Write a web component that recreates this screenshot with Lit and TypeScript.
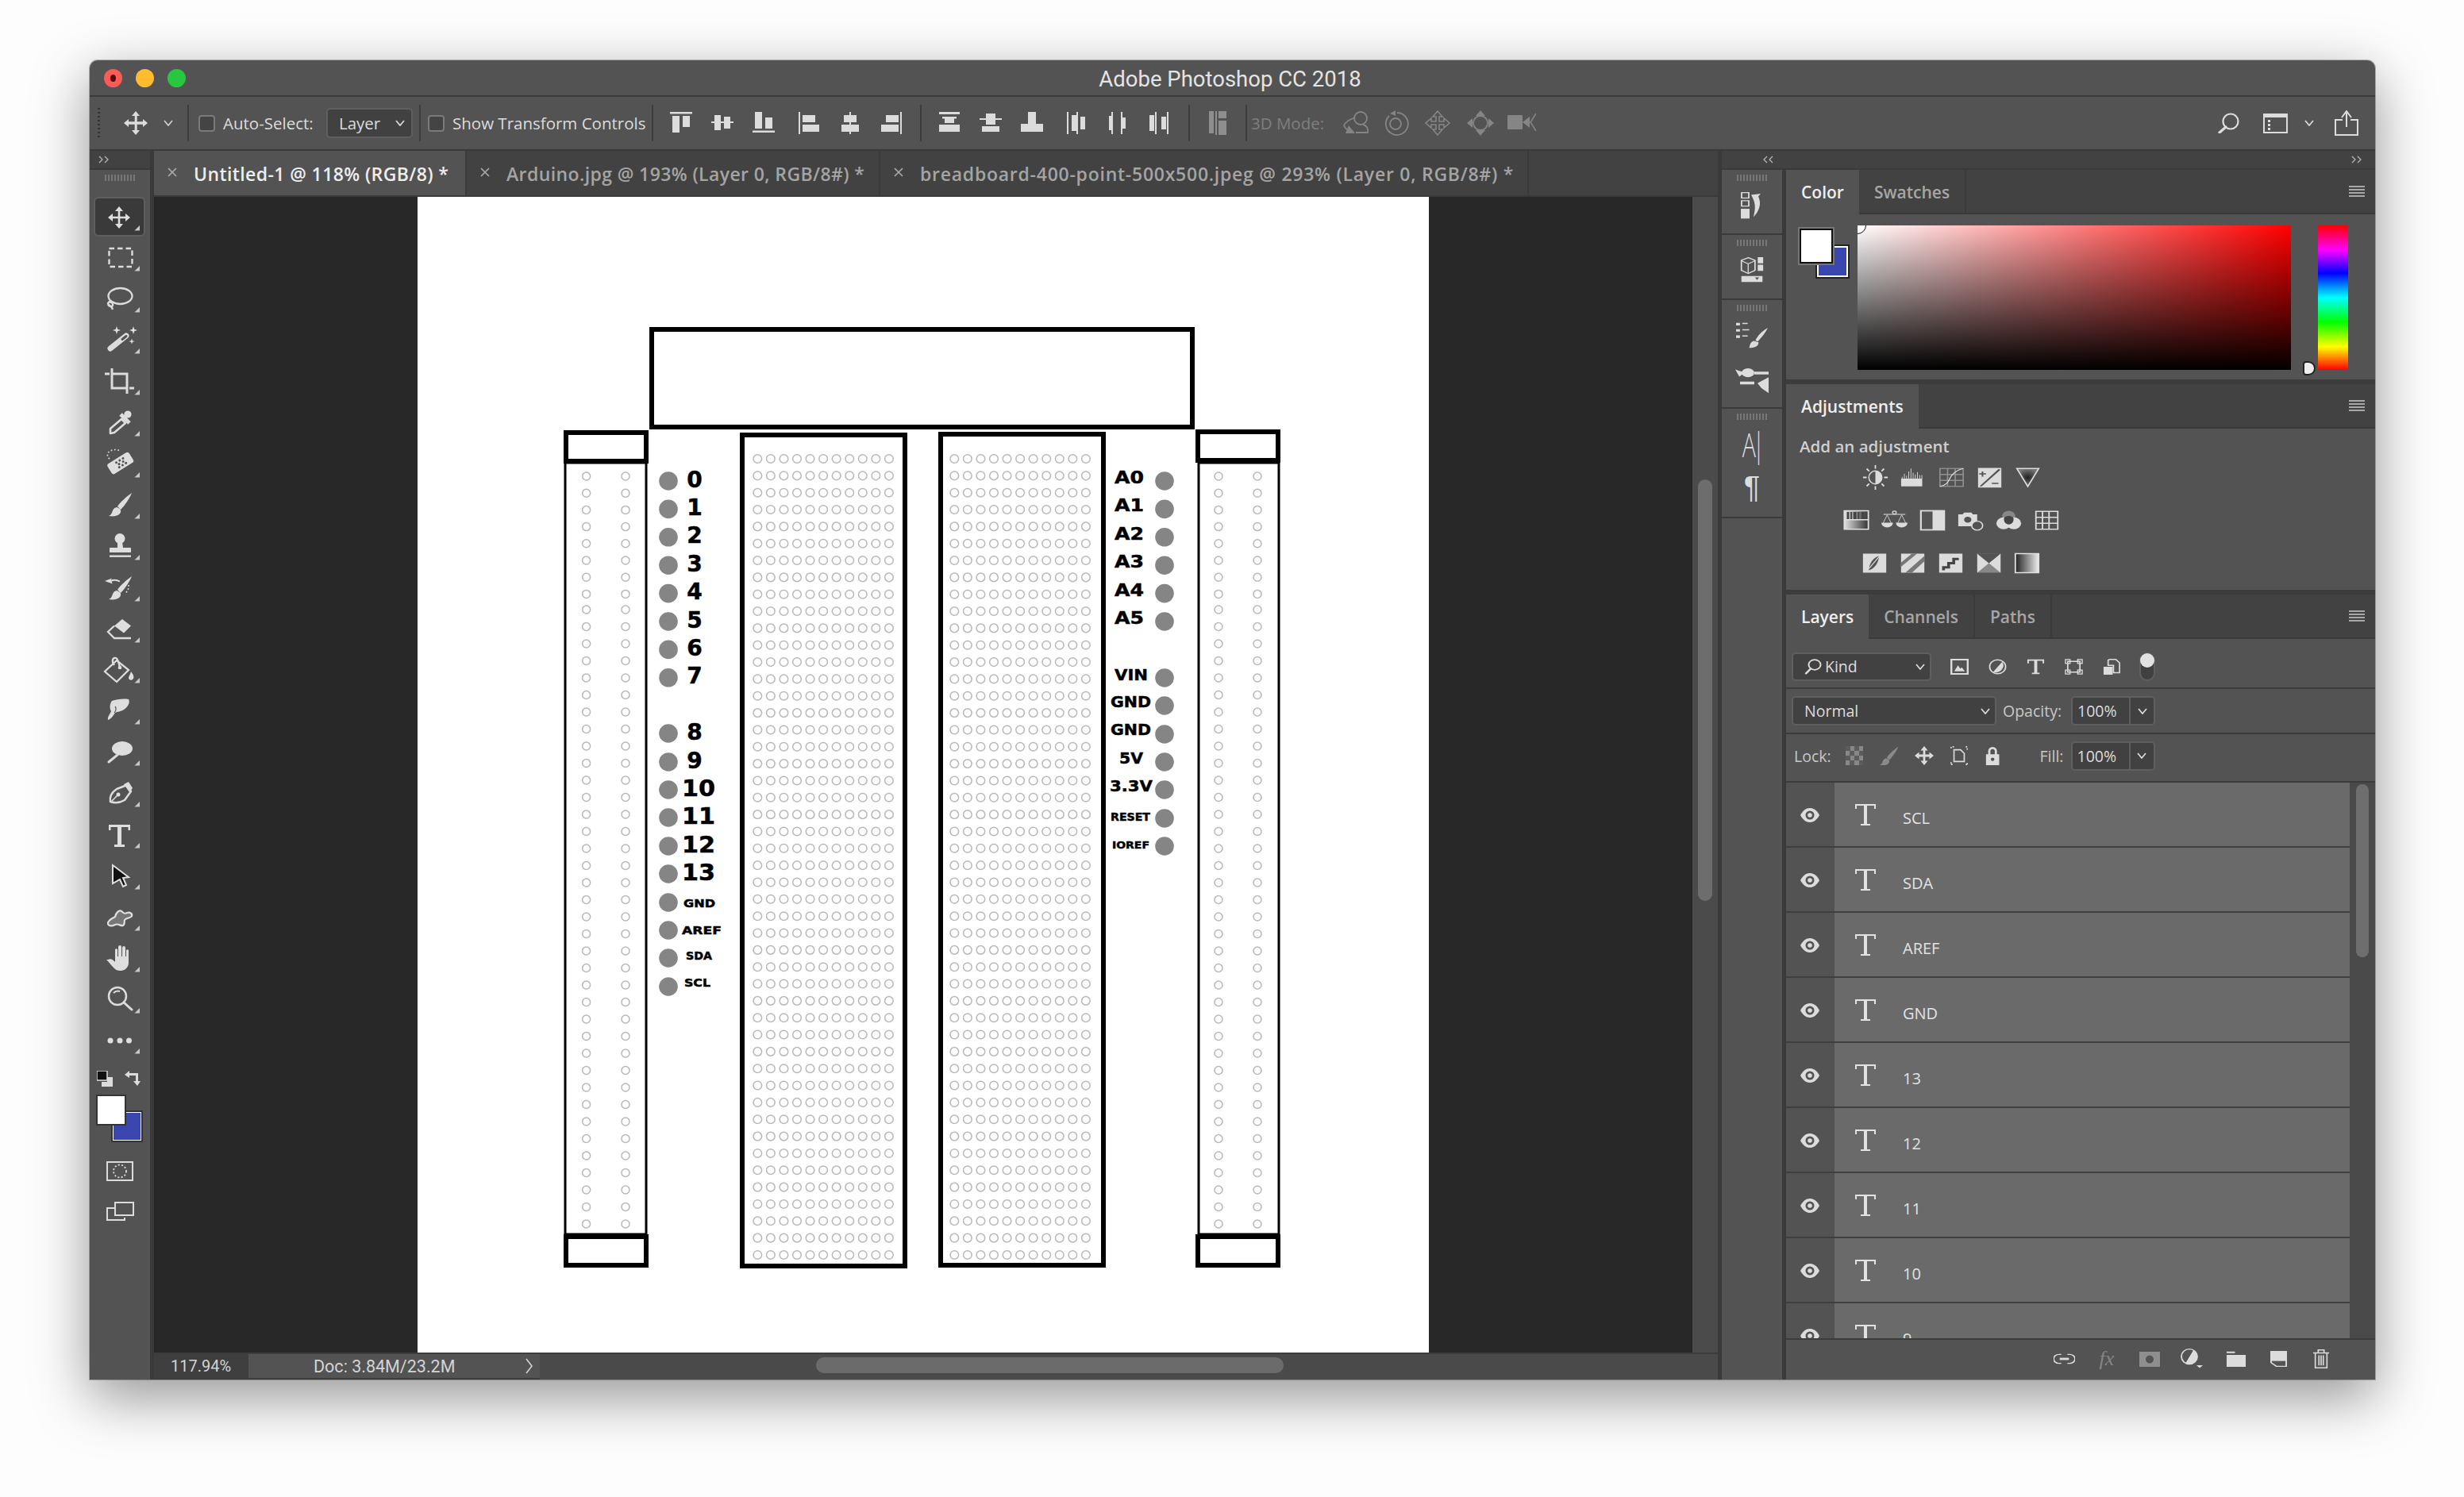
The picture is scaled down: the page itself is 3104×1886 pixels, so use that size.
import { LitElement, html, svg, css, TemplateResult } from "lit";
import { customElement } from "lit/decorators.js";

// little svg wrappers, all icons are currentColor
const ic = (w: number, h: number, inner: unknown, vw = w, vh = h) =>
  html`<svg class="ic" width=${w} height=${h} viewBox="0 0 ${vw} ${vh}" preserveAspectRatio="none" fill="currentColor">${inner}</svg>`;

const chev = (w = 12, h = 8) =>
  html`<svg class="ic" width=${w} height=${h} viewBox="0 0 12 8" fill="none" stroke="currentColor" stroke-width="1.7"><path d="M1 1l5 6 5-6"/></svg>`;

const sparkle = (x: number, y: number, r: number) =>
  svg`<path d="M${x} ${y - r}l${r * 0.25} ${r * 0.75} ${r * 0.75} ${r * 0.25} ${-r * 0.75} ${r * 0.25} ${-r * 0.25} ${r * 0.75} ${-r * 0.25} ${-r * 0.75} ${-r * 0.75} ${-r * 0.25} ${r * 0.75} ${-r * 0.25}z"/>`;

const brushShape = svg`<path d="M48 10C42 14 33 22 30 27l4 4C38 27 45 18 48 10z"/><path d="M29 28c-4 1-5 4-6 7-1 2-2 3-4 4 6 1 12 0 14-3 2-2 1-5 0-6z"/>`;

const toolIcons: TemplateResult[] = [
  svg`<path d="M32 12l-5 6h3.700v6.700H24V21l-6 5 6 5v-3.700h6.700V34H27l5 6 5-6h-3.700v-6.700H40V31l6-5-6-5v3.700h-6.700V18H37z"/>`,
  svg`<rect x="19.500" y="14" width="29" height="23" fill="none" stroke="currentColor" stroke-width="2.400" stroke-dasharray="6.500 4"/>`,
  svg`<g fill="none" stroke="currentColor" stroke-width="2.300"><ellipse cx="33.500" cy="22" rx="15" ry="10"/><path d="M23 29c-4-1-6 2-4 5 2 2 6 1 5-2s-5-3-6-1c0 3 5 3 6 8"/></g>`,
  svg`<path d="M21 36L41 20" fill="none" stroke="currentColor" stroke-width="7" stroke-linecap="round"/><path d="M36 24.500l5-4" stroke="#535353" stroke-width="3" stroke-linecap="round"/>${sparkle(29, 13, 5)}${sparkle(50, 13, 5)}${sparkle(48, 27, 3.5)}`,
  svg`<path d="M14 16h6M23 9v25h20M23 16h19v25M45 34h6" fill="none" stroke="currentColor" stroke-width="3"/>`,
  svg`<path d="M21 33L35 21l5 5-14 12-5 1z" fill="none" stroke="currentColor" stroke-width="2.600" stroke-linejoin="round"/><path d="M34 15l11 11" stroke="currentColor" stroke-width="5"/><circle cx="43" cy="15" r="4.600"/><path d="M38 20l6-6" stroke="currentColor" stroke-width="5"/>`,
  svg`<g transform="rotate(-32 34 25)"><rect x="18" y="17" width="32" height="15" rx="3"/><g fill="#535353"><circle cx="30" cy="21" r="1.500"/><circle cx="35" cy="21" r="1.500"/><circle cx="40" cy="21" r="1.500"/><circle cx="30" cy="28" r="1.500"/><circle cx="35" cy="28" r="1.500"/><circle cx="40" cy="28" r="1.500"/><circle cx="32" cy="24.500" r="1.500"/><circle cx="38" cy="24.500" r="1.500"/></g></g><path d="M20 19c-4-3-3-8 1-10s9-2 12 0" fill="none" stroke="currentColor" stroke-width="1.700" stroke-dasharray="1.700 2.600"/>`,
  brushShape,
  svg`<circle cx="33" cy="15.500" r="6.500"/><path d="M30 20h6l1 7h9q1 0 1 1v5H20v-5q0-1 1-1h9z"/><rect x="20" y="36.500" width="27" height="2.400"/>`,
  svg`<g transform="translate(0 1)">${brushShape}</g><path d="M14 17l9-3.500-1.500 2.200c4-1.500 8-1 12 1.300l-1 1.300c-3.500-1.700-7-2-10-.6l1.200 2.800z"/><path d="M44 22c.5 4-1 8-4 10" fill="none" stroke="currentColor" stroke-width="1.700" stroke-dasharray="1.700 2.500"/>`,
  svg`<path d="M36 13l11 8.500-9 9-12-9z"/><path d="M26 21.500l-8 7.500 8 8h21" fill="none" stroke="currentColor" stroke-width="2.300"/>`,
  svg`<path d="M29 14L14 28l15 13 15-15z" fill="none" stroke="currentColor" stroke-width="2.300"/><path d="M26 20c-4-5-2-10 2-9 3 1 3 6 5 11" fill="none" stroke="currentColor" stroke-width="2.300"/><circle cx="33" cy="23" r="2.300"/><path d="M47 28c3 4 4 6 3 9-2 3-6 2-6-1 0-2 2-4 3-8z"/>`,
  svg`<path d="M23 13c6-2 14-3 21-2 2 3 0 9-6 13-4 3-8 2-11 4-2 3-5 8-9 9-1-4 3-8 4-11-2-3-2-9 1-13z"/><path d="M27 20c2 2 1 6-1 8" stroke="#535353" stroke-width="1.200" fill="none"/>`,
  svg`<ellipse cx="36" cy="21" rx="13" ry="9"/><path d="M19 38l11-9" stroke="currentColor" stroke-width="3" stroke-linecap="round"/>`,
  svg`<path d="M21 36c-1-6 2-12 8-16l13-5 5 8-8 11c-5 3-12 4-18 2z" fill="none" stroke="currentColor" stroke-width="2.500" stroke-linejoin="round"/><path d="M38 14l6-3 5 8-4 5z"/><circle cx="31" cy="27" r="2.500"/><path d="M22 36l8-8" stroke="currentColor" stroke-width="1.600"/>`,
  svg`<path d="M19 13h27v7h-2.500v-4H35v22h4v3H26v-3h4V16h-8.500v4H19z"/>`,
  svg`<path d="M24 12l20 15-7 1 4 9-4 2-4-9-9 5z" fill="#111" stroke="#e0e0e0" stroke-width="2"/>`,
  svg`<path d="M18 34c-1-4 5-7 9-9 1-5 5-9 8-7 3 2 3 4 7 2 4-1 7 1 6 4-1 3-7 2-9 5-1 3 1 5-2 7-3 1-6-3-10-1-4 2-8 2-9-1z" fill="#777" stroke="#e0e0e0" stroke-width="2.200"/>`,
  svg`<path d="M18 27c4-2 7 1 9 3V14a2 2 0 0 1 3 0v9h1V11a2 2 0 0 1 4 0v12h1V12a2 2 0 0 1 4 0v11h1v-8a2 2 0 0 1 3 0v16c0 6-5 10-10 10-4 0-6-1-9-4-3-3-5-6-9-10z"/>`,
  svg`<circle cx="30" cy="21" r="11" fill="none" stroke="currentColor" stroke-width="2.500"/><path d="M38 29l10 9" stroke="currentColor" stroke-width="3" stroke-linecap="round"/><path d="M25 17c2-2 5-3 8-2" fill="none" stroke="currentColor" stroke-width="2"/>`,
  svg`<circle cx="21" cy="26" r="3.500"/><circle cx="33" cy="26" r="3.500"/><circle cx="44.500" cy="26" r="3.500"/>`,
];

const alignIcons: TemplateResult[] = [
  svg`<path d="M0 0h28v2.500H0zM3 5h9v21H3zM16 5h9v14h-9z"/>`,
  svg`<path d="M0 12h28v2H0zM4 4h8v19H4zM16 6h8v15h-8z"/>`,
  svg`<path d="M0 23.500h28V26H0zM3 0h9v21H3zM16 7h9v14h-9z"/>`,
  svg`<path d="M0 0h2v28H0zM5 4h16v9H5zM5 16h21v9H5z"/>`,
  svg`<path d="M12 0h2v28h-2zM5 4h16v9H5zM2 16h22v9H2z"/>`,
  svg`<path d="M24 0h2v28h-2zM6 4h16v9H6zM0 16h22v9H0z"/>`,
  svg`<path d="M2 0h26v3H2zM6 6h18v2.500H21V14h-12V8.500H6zM2 16h26v9H2z" transform="translate(-1 0)"/>`,
  svg`<path d="M8 2h12v6h8v2H20v6h-12v-6H0V8h8zM3 18h22v7H3z"/>`,
  svg`<path d="M9 0h10v15h9v10H0V15h9zM0 22h28v3H0z"/>`,
  svg`<path d="M0 0h2v28H0zM6 4h6v20H6zM12 0h2v28h-2zM17 6h6v16h-6z"/>`,
  svg`<path d="M3 0h2v28H3zM0 5h5v18H0zM15 0h2v28h-2zM15 7h6v14h-6z" transform="translate(1 0)"/>`,
  svg`<path d="M0 4h6v20H0zM7 0h2v28H7zM15 6h6v16h-6zM22 0h2v28h-2z"/>`,
];

const threeD: TemplateResult[] = [
  svg`<g fill="none" stroke="currentColor" stroke-width="1.800"><circle cx="23" cy="10" r="8"/><path d="M16 9C8 12 3 16 2 19c2 6 8 7 10 8"/><path d="M26 18c5 1 7 6 6 10H17"/></g><path d="M8 19l8 10H4z"/>`,
  svg`<g fill="none" stroke="currentColor" stroke-width="1.800"><path d="M7 7a14 14 0 1 0 10-4"/><circle cx="15" cy="17" r="7"/></g><path d="M15 0v7l-7-3z"/>`,
  svg`<path d="M16 1l6 7h-4v6h6v-4l7 6-7 6v-4h-6v6h4l-6 7-6-7h4v-6H8v4l-7-6 7-6v4h6V8h-4z" fill="none" stroke="currentColor" stroke-width="1.600"/>`,
  svg`<path d="M18 0l6 7H12zM18 32l-6-7h12zM1 16l7-6v12zM35 16l-7-6v12z"/><circle cx="18" cy="16" r="9" fill="none" stroke="currentColor" stroke-width="1.800"/>`,
  svg`<rect x="0" y="6" width="19" height="18" rx="1"/><path d="M19 15l9-7v14z"/><path d="M36 4l-7 11 7 11" fill="none" stroke="currentColor" stroke-width="1.600"/>`,
];

const adjIcons: TemplateResult[][] = [
  [
    svg`<circle cx="18" cy="18" r="9" fill="none" stroke="currentColor" stroke-width="1.600"/><path d="M18 9a9 9 0 0 1 0 18z"/><path d="M18 1v5M18 30v5M1 18h5M30 18h5M6 6l3.500 3.500M26.500 26.500L30 30M6 30l3.500-3.500M26.500 9.500L30 6" stroke="currentColor" stroke-width="2"/>`,
    svg`<path d="M1 33V20h1v-3h1v3h2V12h1v8h2v-5h1v5h2V8h1v12h2V3h1v17h2V10h1v10h2v-7h1v7h2V9h1v11h2v-6h1v6h2V14h1v19z"/>`,
    svg`<g fill="none" stroke="#909090" stroke-width="1.800"><rect x="2" y="3" width="32" height="30"/><path d="M12.500 3v30M23 3v30M2 13h32M2 23h32"/></g><path d="M2 33C14 31 14 21 18 15s8-10 16-12" fill="none" stroke="currentColor" stroke-width="1.500"/>`,
    svg`<path fill-rule="evenodd" d="M2 2h32v33H2zM7 8v3H3.500v2H7v3.500h2.200V13H13v-2H9.200V8zM21 27v2h9v-2zM30 4L4 33h3L33 5z"/>`,
    svg`<defs><radialGradient id="vib"><stop offset="0" stop-color="#222"/><stop offset="1" stop-color="#777"/></radialGradient></defs><path d="M3 3h30L18 33z" fill="url(#vib)" stroke="currentColor" stroke-width="2"/>`,
  ],
  [
    svg`<defs><linearGradient id="hsl" x1="0" x2="1"><stop offset="0" stop-color="#e0e0e0"/><stop offset="1" stop-color="#333"/></linearGradient></defs><rect x="1.500" y="2" width="33" height="31" fill="url(#hsl)" stroke="#e0e0e0" stroke-width="2"/><path d="M5 4h3v13H5zM10 4h2v13h-2zM14 4h4v13h-4zM20 4h2v13h-2zM25 4h4v13h-4z" fill="#444"/><rect x="2" y="16" width="32" height="2" fill="#e0e0e0"/>`,
    svg`<circle cx="18" cy="5" r="2.500" fill="none" stroke="currentColor" stroke-width="1.400"/><path d="M3 8h30" stroke="currentColor" stroke-width="1.400"/><path d="M8 9L2 24h12zM28 9l-6 15h12z" fill="none" stroke="currentColor" stroke-width="1"/><path d="M0 22a8 8 0 0 0 16 0zM20 22a8 8 0 0 0 16 0z"/>`,
    svg`<rect x="2" y="2" width="32" height="32" fill="none" stroke="currentColor" stroke-width="2.400"/><rect x="18" y="2" width="16" height="32"/>`,
    svg`<path d="M1 8h6l2-3h10l2 3h6v20H1z"/><circle cx="14" cy="17" r="5" fill="#535353"/><circle cx="27" cy="27" r="7.500" fill="#535353" stroke="currentColor" stroke-width="1.800"/>`,
    svg`<circle cx="18" cy="11" r="9" fill="#888"/><circle cx="11" cy="23" r="10" fill="#dcdcdc"/><circle cx="25" cy="23" r="10" fill="#dcdcdc"/><path d="M12 13c4-3 8-3 12 0 2 5-1 12-6 12s-8-7-6-12z" fill="#444"/>`,
    svg`<path fill-rule="evenodd" d="M2 2h32v32H2zM4 4v8h7V4zM13 4v8h7V4zM22 4v8h10V4zM4 14v8h7v-8zM13 14v8h7v-8zM22 14v8h10v-8zM4 24v8h7v-8zM13 24v8h7v-8zM22 24v8h10v-8z"/>`,
  ],
  [
    svg`<rect x="2" y="2" width="32" height="32"/><path d="M24 6C16 8 10 20 10 30c8-2 14-14 14-24z" fill="#535353"/><path d="M27 3L6 33" stroke="#dcdcdc" stroke-width="1.600"/>`,
    svg`<rect x="2" y="2" width="32" height="32"/><path d="M8 34L34 6v9L17 34zM2 24L24 2h-7L2 17z" fill="#777"/>`,
    svg`<rect x="2" y="2" width="32" height="32"/><path d="M6 30v-7h7v-7h7V9h9v4h-5v7h-7v7h-7v3z" fill="#444"/>`,
    svg`<rect x="2" y="2" width="32" height="32" fill="#888"/><path d="M2 2l16 16L2 34zM34 2L18 18l16 16z"/><path d="M2 2h32L18 18z" fill="#535353"/>`,
    svg`<defs><linearGradient id="gmap" x1="0" x2="1"><stop offset="0" stop-color="#222"/><stop offset="1" stop-color="#eee"/></linearGradient></defs><rect x="2" y="2" width="32" height="32" fill="url(#gmap)" stroke="#e0e0e0" stroke-width="2"/>`,
  ],
];

const filterIcons: TemplateResult[] = [
  svg`<path fill-rule="evenodd" d="M0 0h24v24H0zM2.500 2.500v19h19v-19zM5 19l5-9 3 5 2-2 4 6z"/>`,
  svg`<circle cx="12" cy="12" r="10.500" fill="none" stroke="currentColor" stroke-width="1.800"/><path d="M18 4.500A10.500 10.500 0 0 1 6 20z"/>`,
  svg`<path d="M1 1h22v6h-2V3h-7v18h3v2H7v-2h3V3H3v4H1z"/>`,
  svg`<path d="M4 4h16v16H4z" fill="none" stroke="currentColor" stroke-width="1.800"/><path d="M1 1h6v6H1zM17 1h6v6h-6zM1 17h6v6H1zM17 17h6v6h-6z" fill="none" stroke="currentColor" stroke-width="1.400"/>`,
  svg`<path d="M9 1h8l5 5v15H14V10H7V2z" fill="none" stroke="currentColor" stroke-width="1.800"/><path d="M1 12h12v12H1z"/>`,
];

const lockIcons: TemplateResult[] = [
  svg`<path d="M1 0h22v24H1z" fill="#888"/><path d="M1 0h6v6H1zM12 0h6v6h-6zM6 6h6v6H6zM18 6h5v6h-5zM1 12h6v6H1zM12 12h6v6h-6zM6 18h6v6H6zM18 18h5v6h-5z" fill="#5c5c5c"/>`,
  svg`<g transform="translate(-19 -9) scale(1)" fill="#8a8a8a">${brushShape}</g>`,
  svg`<path d="M13 0l5 6h-3.500v5.500H20V8l6 5-6 5v-3.500h-5.500V20H18l-5 6-5-6h3.500v-5.500H6V18l-6-5 6-5v3.500h5.500V6H8z"/>`,
  svg`<path d="M6 5h9l5 5v11H6z" fill="none" stroke="currentColor" stroke-width="1.800"/><path d="M2 1v2M6 1H4M24 1h-2M24 3v2M2 24v-2M2 25h2M24 25v-2M22 25h2" stroke="currentColor" stroke-width="1.800"/>`,
  svg`<path d="M5 11V7a6 6 0 0 1 12 0v4h3v15H2V11zM8 11h6V7a3 3 0 0 0-6 0z"/><circle cx="11" cy="18" r="2.400" fill="#535353"/>`,
];

const dockIcons = {
  history: svg`<g fill="none" stroke="currentColor" stroke-width="1.800"><rect x="1" y="1" width="9" height="10"/><rect x="1" y="16" width="9" height="10"/></g><rect y="31" width="11" height="18"/><path d="M13 5l12-2-3 5c4 12 2 26-6 38 2-13 3-24-1-35z"/>`,
  cube: svg`<path d="M12 1l10 5v20l-10 6-10-6V6z" fill="none" stroke="currentColor" stroke-width="2"/><path d="M2 7l10 6 10-6M12 13v18" fill="none" stroke="currentColor" stroke-width="1.500"/><path d="M26 0h8v12h-8zM26 15h8v12h-8zM2 37h31v12H2z"/><path d="M22 40h6l-3 5z" fill="#535353"/>`,
  brushes: svg`<path d="M0 1h5v4H0zM8 1h7v2H8zM0 11h5v4H0zM8 11h9v2H8zM0 21h5v4H0zM8 21h7v2H8z"/><path d="M41 9c-3 8-8 15-13 22l-3-2c3-8 9-15 16-20zM23 30c-3 1-4 3-5 6l-1 5c6 0 12-2 12-9z"/>`,
  sliders: svg`<circle cx="16" cy="8" r="8"/><path d="M0 2l12 6L5 15zM24 6h18v5H24zM6 24h18v5H6zM28 27l14-11v29L33 36z"/>`,
};

const LEFT_PINS = [
  ["0", 606],
  ["1", 641.4],
  ["2", 676.8],
  ["3", 712.2],
  ["4", 747.6],
  ["5", 783],
  ["6", 818.4],
  ["7", 853.8],
  ["8", 924],
  ["9", 960],
] as const;

const LEFT_WIDE = [
  ["10", 995],
  ["11", 1030],
  ["12", 1066],
  ["13", 1101],
] as const;

// text, x, len, baseline, pin y
const SMALL_LEFT = [
  ["GND", 861, 40, 1143, 1137],
  ["AREF", 859, 50, 1177, 1172],
  ["SDA", 864, 33, 1209, 1207],
  ["SCL", 862, 33, 1243, 1243],
] as const;

const RIGHT_LABELS = [
  ["A0", 1404, 37, 609, 22],
  ["A1", 1404, 37, 644.4, 22],
  ["A2", 1404, 37, 679.8, 22],
  ["A3", 1404, 37, 715.2, 22],
  ["A4", 1404, 37, 750.6, 22],
  ["A5", 1404, 37, 786, 22],
  ["VIN", 1404, 42, 857, 20],
  ["GND", 1399, 51, 891, 19],
  ["GND", 1399, 51, 926, 19],
  ["5V", 1410, 30, 962, 20],
  ["3.3V", 1398, 54, 997, 20],
  ["RESET", 1399, 50, 1034, 14],
  ["IOREF", 1401, 47, 1069, 13],
] as const;

const RIGHT_PINS = [606, 641.4, 676.8, 712.2, 747.6, 783, 854, 889, 925, 960, 995, 1031, 1066];

const range = (n: number) => Array.from({ length: n }, (_, i) => i);
const railY = (i: number) => (i < 8 ? 600 + 21.2 * i : 768 + 21.5 * (i - 8));
const boardY = (i: number) => 578 + 21.34 * i;

const LAYERS = ["SCL", "SDA", "AREF", "GND", "13", "12", "11", "10", "9"];

@customElement("app-root")
export class AppRoot extends LitElement {
  static styles = css`
    :host {
      display: block;
      width: 3104px;
      height: 1886px;
      box-sizing: border-box;
      padding: 76px 112px 148px 113px;
      background: #fdfdfd;
      font-family: "Open Sans", sans-serif;
      color: #dcdcdc;
      overflow: hidden;
    }
    .ic { display: block; flex: none; }
    .window {
      display: flex;
      flex-direction: column;
      height: 100%;
      background: #535353;
      border-radius: 10px 10px 0 0;
      box-shadow: 0 22px 70px 2px rgba(0, 0, 0, 0.4), 0 0 0 1px rgba(0, 0, 0, 0.25);
    }
    .titlebar {
      display: grid;
      grid-template-columns: 1fr auto 1fr;
      align-items: center;
      height: 44px;
      border-bottom: 2px solid #3a3a3a;
      flex: none;
    }
    .lights { display: flex; gap: 17px; padding-left: 18px; }
    .light { width: 23px; height: 23px; border-radius: 50%; display: flex; align-items: center; justify-content: center; }
    .light.red { background: #fc5b57; }
    .light.red::after { content: ""; width: 7px; height: 9px; border-radius: 50%; background: #560a08; }
    .light.amber { background: #febc2e; }
    .light.green { background: #27c83f; }
    .title { font: 400 27.5px Roboto, sans-serif; color: #e4e4e4; padding: 3px 6px 0 0; }

    .options {
      display: flex;
      align-items: center;
      flex: none;
      height: 66px;
      border-bottom: 2px solid #3a3a3a;
      padding-left: 10px;
      font-size: 20.500px;
    }
    .vgrip { width: 3px; height: 38px; background: repeating-linear-gradient(#333 0 2px, transparent 2px 5px); }
    .sep { width: 2px; height: 46px; background: #3d3d3d; flex: none; }
    .move-opt { margin: 0 20px 0 30px; }
    .opt-chev { margin-right: 18px; color: #cfcfcf; }
    .check { width: 21px; height: 21px; box-sizing: border-box; border: 2px solid #7a7a7a; border-radius: 4px; background: #444; margin: 0 10px 0 12px; flex: none; }
    .check.second { margin-left: 9px; }
    .opt-label { white-space: nowrap; flex: none; }
    .auto { width: 120px; }
    .transform { width: 251px; }
    .combo {
      display: flex;
      align-items: center;
      justify-content: space-between;
      box-sizing: border-box;
      background: #414141;
      border: 2px solid #5f5f5f;
      border-radius: 5px;
      color: #dcdcdc;
      flex: none;
    }
    .layer-combo { width: 109px; height: 38px; margin: 0 8px 0 10px; padding: 0 8px 0 14px; }
    .align { display: flex; padding: 0 9px; }
    .align-set { display: flex; }
    .align-set + .align-set { margin-left: 6px; }
    .cell { width: 52px; display: flex; justify-content: center; }
    .dim { color: #8e8e8e; }
    .mode3d { color: #7f7f7f; width: 112px; padding-left: 5px; box-sizing: border-box; white-space: nowrap; }
    .cells3d { display: flex; color: #858585; }
    .opt-right { margin-left: auto; display: flex; align-items: center; padding-right: 21px; color: #dcdcdc; }
    .opt-right .workspace { margin: 0 21px 0 30px; }
    .opt-right .wchev { margin-right: 26px; }

    .main { flex: 1; display: flex; min-height: 0; }
    .tools { width: 76px; flex: none; display: flex; flex-direction: column; border-right: 5px solid #3a3a3a; }
    .collapse {
      height: 22px;
      border-bottom: 2px solid #3a3a3a;
      background: #424242;
      display: flex;
      align-items: center;
      color: #b5b5b5;
      flex: none;
    }
    .tools .collapse { padding-left: 11px; }
    .grip {
      width: 38px;
      height: 8px;
      margin: 0 auto;
      background: repeating-linear-gradient(90deg, #777 0 2px, transparent 2px 4px);
      flex: none;
    }
    .tools .grip { margin-top: 6px; margin-bottom: 19.6px; }
    .tool { position: relative; height: 51.9px; width: 65px; margin-left: 5px; box-sizing: border-box; flex: none; }
    .tool.on::before {
      content: "";
      position: absolute;
      inset: 0 0 1px 0;
      background: #3a3a3a;
      border: 2px solid #5e5e5e;
      border-radius: 6px;
    }
    .tool svg { position: relative; }
    .swap { display: flex; justify-content: space-between; margin: 12px 0 0 9px; width: 55px; height: 22px; }
    .fgbg { position: relative; height: 59px; margin: 8px 0 0 8px; flex: none; }
    .fg { position: absolute; left: 0; top: 0; width: 38px; height: 39px; box-sizing: border-box; background: #fff; border: 2px solid #333; z-index: 1; }
    .bg { position: absolute; left: 20px; top: 21px; width: 38px; height: 38px; box-sizing: border-box; background: #3a46ae; border: 2px solid #fff; outline: 2px solid #333; outline-offset: -1px; }
    .mask { margin: 25px 0 0 21px; color: #dcdcdc; }
    .screens { margin: 26px 0 0 21px; }

    .center { width: 1970px; flex: none; display: flex; flex-direction: column; min-height: 0; }
    .tabs { display: flex; height: 56px; background: #424242; border-bottom: 2px solid #3a3a3a; flex: none; }
    .tab {
      display: flex;
      align-items: center;
      gap: 21px;
      padding: 2px 0 0 17px;
      box-sizing: border-box;
      border-right: 2px solid #3a3a3a;
      font-size: 23px;
      letter-spacing: 0.75px;
      font-weight: 600;
      color: #a4a4a4;
      white-space: nowrap;
    }
    .tab.short { letter-spacing: 0.4px; }
    .tab.on { background: #535353; color: #ededed; }
    .tab svg { color: #a9a9a9; margin-top: -5px; }
    .stage { flex: 1; display: flex; min-height: 0; }
    .pasteboard { flex: 1; background: #282828; padding-left: 332px; min-width: 0; }
    .doc { display: block; width: 1274px; height: 1456px; background: #fff; }
    .doc text { font-family: "DejaVu Sans", sans-serif; font-weight: 700; fill: #000; stroke: #000; stroke-width: 0.5; }
    .hole { fill: none; stroke: #b8b8b8; stroke-width: 1.5; }
    .frame { fill: none; stroke: #000; stroke-width: 6; }
    .frame.thin { stroke-width: 3; }
    .pin { fill: #858585; }
    .vscroll { width: 32px; flex: none; background: #4b4b4b; box-sizing: border-box; padding: 356px 7px 0; }
    .vscroll div { height: 531px; background: #6d6d6d; border-radius: 9px; }
    .status { height: 34px; flex: none; display: flex; background: #4a4a4a; font: 400 20px Roboto, sans-serif; color: #d4d4d4; border-top: 2px solid #3d3d3d; box-sizing: border-box; }
    .zoom { width: 119px; box-sizing: border-box; padding-left: 21px; background: #3f3f3f; display: flex; align-items: center; border-bottom: 2px solid #3d3d3d; }
    .docinfo { width: 367px; box-sizing: border-box; padding: 0 8px 0 82px; background: #535353; display: flex; align-items: center; justify-content: space-between; border-bottom: 2px solid #3d3d3d; font-size: 21.5px; }
    .hthumb { width: 589px; height: 20px; margin: 4px 0 0 348px; background: #6b6b6b; border-radius: 10px; }

    .gutter { width: 5px; background: #3a3a3a; flex: none; }
    .dock { flex: 1; display: flex; flex-direction: column; min-width: 0; }
    .dock > .collapse { justify-content: space-between; padding: 0 16px 0 51px; }
    .dock-body { flex: 1; display: flex; min-height: 0; }
    .icons { width: 76px; flex: none; display: flex; flex-direction: column; }
    .igroup { display: flex; flex-direction: column; align-items: center; box-sizing: border-box; border-bottom: 2px solid #3a3a3a; padding-top: 6px; flex: none; }
    .igroup .grip { margin-bottom: 14px; }
    .igroup.a { height: 82px; }
    .igroup.b { height: 137px; }
    .igroup.c { height: 138px; }
    .igroup.b svg + svg { margin-top: 25px; }
    .glyph { font: 300 42px/34px "Open Sans", sans-serif; letter-spacing: -6px; color: #dcdcdc; transform: scaleX(0.68); }
    .pilcrow { font: 400 38px/38px "Liberation Sans", sans-serif; margin-top: 18px; }
    .panels { flex: 1; display: flex; flex-direction: column; min-width: 0; }
    .ptabs { display: flex; height: 54px; background: #424242; border-bottom: 2px solid #3a3a3a; flex: none; }
    .ptab { display: flex; align-items: center; padding: 2px 19px 0; font-size: 21px; font-weight: 600; color: #a6a6a6; border-right: 2px solid #3a3a3a; box-sizing: border-box; }
    .ptab.on { background: #535353; color: #eee; border-right: 0; margin-bottom: -2px; padding-bottom: 2px; }
    .burger { margin-left: auto; width: 20px; height: 14px; margin-right: 13px; align-self: center; background: repeating-linear-gradient(#a8a8a8 0 2px, transparent 2px 4px); }
    .pend { height: 6px; background: #3c3c3c; flex: none; }
    .colorbody { height: 208px; display: flex; padding-top: 14px; box-sizing: border-box; flex: none; }
    .cswatch { position: relative; width: 61px; margin: 4px 0 0 17px; flex: none; }
    .cfg { position: absolute; left: 0; top: 0; width: 42px; height: 44px; box-sizing: border-box; background: #fff; border: 2px solid #111; outline: 2px solid #777; z-index: 1; }
    .cbg { position: absolute; left: 22px; top: 22px; width: 39px; height: 39px; box-sizing: border-box; background: #3a46ae; border: 2px solid #fff; outline: 2px solid #222; }
    .field {
      position: relative;
      width: 546px;
      height: 182px;
      margin-left: 12px;
      background: linear-gradient(to top, #000, transparent), linear-gradient(to right, #fff, #f00);
      overflow: hidden;
      flex: none;
    }
    .field::after { content: ""; position: absolute; left: -11px; top: -11px; width: 20px; height: 20px; border-radius: 50%; border: 1.500px solid #111; background: #fff; }
    .hue {
      position: relative;
      width: 38px;
      height: 182px;
      margin-left: 34px;
      background: linear-gradient(#f00 0%, #f0f 17%, #00f 33%, #0ff 50%, #0f0 67%, #ff0 84%, #f00 100%);
      flex: none;
    }
    .hue::after {
      content: "";
      position: absolute;
      left: -19px;
      bottom: -7px;
      width: 12px;
      height: 14px;
      background: #eee;
      border: 2px solid #222;
      border-radius: 4px 9px 9px 4px;
    }
    .adjbody { height: 203px; flex: none; }
    .adjlabel { height: 34px; box-sizing: border-box; padding: 9px 0 0 17px; line-height: 26px; font-size: 20.5px; font-weight: 600; color: #cfcfcf; }
    .adjrow { display: flex; height: 54px; align-items: center; }
    .adjrow.r1 { padding-left: 88px; }
    .adjrow.r2 { padding-left: 64px; }
    .adjrow.r3 { padding-left: 87px; }
    .adjrow .acell { width: 48px; display: flex; justify-content: center; }
    .layerbar { display: flex; align-items: center; padding-left: 7px; border-bottom: 2px solid #3c3c3c; flex: none; box-sizing: border-box; font-size: 19.5px; }
    .layerbar.f { height: 63px; padding-top: 8px; }
    .layerbar.n { height: 57px; }
    .layerbar.l { height: 61px; padding: 0 0 5px 10px; }
    .kind { width: 176px; height: 36px; padding: 0 6px 0 14px; margin-right: 11px; justify-content: flex-start; gap: 4px; }
    .kind .ic:last-child { margin-left: auto; }
    .fcell { width: 48px; display: flex; justify-content: center; }
    .toggle { width: 20px; height: 36px; box-sizing: border-box; border: 2px solid #5f5f5f; background: #404040; border-radius: 10px; margin-left: 11px; position: relative; flex: none; }
    .toggle::before { content: ""; position: absolute; left: -1px; top: -1px; width: 18px; height: 18px; border-radius: 50%; background: #e2e2e2; }
    .normal { width: 258px; height: 37px; padding: 0 6px 0 14px; }
    .olabel { width: 78px; margin: 0 8px; white-space: nowrap; color: #c8c8c8; flex: none; }
    .pct { width: 106px; height: 37px; padding: 0; }
    .pct span { flex: 1; padding-left: 6px; }
    .pct .arrow { width: 31px; height: 100%; box-sizing: border-box; border-left: 2px solid #5f5f5f; display: flex; align-items: center; justify-content: center; }
    .lock-label { width: 51px; color: #c8c8c8; white-space: nowrap; flex: none; margin-right: 2.500px; }
    .lcell { width: 44px; display: flex; justify-content: center; }
    .fill-label { width: 33px; margin: 0 6px 0 36px; color: #c8c8c8; flex: none; }
    .layers { flex: 1; min-height: 0; display: flex; overflow: hidden; }
    .rows { flex: 1; min-width: 0; overflow: hidden; }
    .row { display: flex; height: 80px; border-bottom: 2px solid #3f3f3f; }
    .eye { width: 61px; flex: none; display: flex; align-items: center; justify-content: center; padding: 2px 2px 0 0; box-sizing: border-box; }
    .lcontent { flex: 1; display: flex; align-items: center; background: #6a6a6a; padding-left: 26px; font-size: 20px; color: #e2e2e2; }
    .lcontent span { margin: 8px 0 0 34px; }
    .lscroll { width: 32px; flex: none; background: #4a4a4a; padding: 2px 8px 0; box-sizing: border-box; }
    .lscroll div { height: 218px; background: #6e6e6e; border-radius: 8px; }
    .pfooter { height: 52px; flex: none; border-top: 2px solid #3c3c3c; box-sizing: border-box; display: flex; justify-content: flex-end; align-items: center; padding: 0 41px 2px 0; }
    .fc { width: 54px; display: flex; justify-content: center; }
    .fx { font: italic 300 26px/26px "Liberation Serif", serif; color: #858585; }
  `;

  private renderBoard() {
    const rails = [738.6, 788, 1535, 1584];
    const boards = [954.3, 1202.3];
    return svg`
      <rect class="frame" x="821" y="415" width="681" height="123" />
      <rect class="frame" x="713" y="545" width="101" height="36" />
      <rect class="frame thin" x="712" y="583" width="102" height="972" />
      <rect class="frame" x="713" y="1558" width="101" height="36" />
      <rect class="frame" x="1509" y="544" width="101" height="36" />
      <rect class="frame thin" x="1510" y="583" width="101" height="972" />
      <rect class="frame" x="1509" y="1558" width="101" height="36" />
      <rect class="frame" x="935" y="548" width="205" height="1047" />
      <rect class="frame" x="1185" y="547" width="205" height="1047" />
      ${rails.map((x) => range(45).map((i) => svg`<circle class="hole" cx=${x} cy=${railY(i)} r="5" />`))}
      ${boards.map((x) =>
        range(48).map((r) =>
          range(11).map((c) => svg`<circle class="hole" cx=${x + c * 16.56} cy=${boardY(r)} r="5.3" />`)
        )
      )}
      ${LEFT_PINS.map(
        ([t, y]) => svg`<circle class="pin" cx="842" cy=${y} r="11.8" />
          <text x="875" y=${y + 7.6} font-size="28" text-anchor="middle">${t}</text>`
      )}
      ${LEFT_WIDE.map(
        ([t, y]) => svg`<circle class="pin" cx="842" cy=${y} r="11.8" />
          <text x="859" y=${y + 7.6} font-size="28" textLength="42" lengthAdjust="spacingAndGlyphs">${t}</text>`
      )}
      ${SMALL_LEFT.map(
        ([t, x, len, y, cy]) => svg`<circle class="pin" cx="842" cy=${cy} r="11.8" />
          <text x=${x} y=${y} font-size="14" textLength=${len} lengthAdjust="spacingAndGlyphs">${t}</text>`
      )}
      ${RIGHT_PINS.map((y) => svg`<circle class="pin" cx="1467" cy=${y} r="11.8" />`)}
      ${RIGHT_LABELS.map(
        ([t, x, len, y, fs]) =>
          svg`<text x=${x} y=${y} font-size=${fs} textLength=${len} lengthAdjust="spacingAndGlyphs">${t}</text>`
      )}
    `;
  }

  private renderTools() {
    return toolIcons.map(
      (icon, i) => html`<div class="tool ${i === 0 ? "on" : ""}">
        <svg class="ic" width="65" height="52" viewBox="0 0 65 52" fill="#dedede">
          ${icon}<path d="M58 36v6.500h-6.500z" fill="#c8c8c8" />
        </svg>
      </div>`
    );
  }

  private renderLayerRow(name: string) {
    return html`<div class="row">
      <div class="eye">
        ${ic(
          24,
          18,
          svg`<path fill-rule="evenodd" d="M12 0c6 0 10 5 12 9-2 4-6 9-12 9S2 13 0 9c2-4 6-9 12-9zm0 3.500a5.500 5.500 0 1 0 0 11 5.500 5.500 0 0 0 0-11z"/><circle cx="12" cy="9" r="2.800" />`
        )}
      </div>
      <div class="lcontent">
        ${ic(26, 27, svg`<path d="M0 0h26v6h-2V2h-9v23h4v2H7v-2h4V2H2v4H0z" />`)}
        <span>${name}</span>
      </div>
    </div>`;
  }

  render() {
    return html`<div class="window">
      <div class="titlebar">
        <div class="lights">
          <div class="light red"></div>
          <div class="light amber"></div>
          <div class="light green"></div>
        </div>
        <div class="title">Adobe Photoshop CC 2018</div>
        <div></div>
      </div>

      <div class="options">
        <div class="vgrip"></div>
        <div class="move-opt">${ic(30, 30, svg`<path d="M15 0l-5 6h3.700v7.300H6V10l-6 5 6 5v-3.300h7.700V24H10l5 6 5-6h-3.300v-7.300H24V20l6-5-6-5v3.300h-7.300V6H20z" />`)}</div>
        <div class="opt-chev">${chev()}</div>
        <div class="sep"></div>
        <div class="check"></div>
        <div class="opt-label auto">Auto-Select:</div>
        <div class="combo layer-combo"><span>Layer</span>${chev()}</div>
        <div class="sep"></div>
        <div class="check second"></div>
        <div class="opt-label transform">Show Transform Controls</div>
        <div class="sep"></div>
        <div class="align">
          <div class="align-set">${alignIcons.slice(0, 3).map((i) => html`<div class="cell">${ic(28, 28, i)}</div>`)}</div>
          <div class="align-set">${alignIcons.slice(3, 6).map((i) => html`<div class="cell">${ic(28, 28, i)}</div>`)}</div>
        </div>
        <div class="sep"></div>
        <div class="align">
          <div class="align-set">${alignIcons.slice(6, 9).map((i) => html`<div class="cell">${ic(28, 28, i)}</div>`)}</div>
          <div class="align-set">${alignIcons.slice(9, 12).map((i) => html`<div class="cell">${ic(28, 28, i)}</div>`)}</div>
        </div>
        <div class="sep"></div>
        <div class="align dim">
          <div class="cell">${ic(22, 30, svg`<path d="M0 0h6v28H0zM8 0h2v30H8zM12 0h10v9H12zM12 12h10v18H12z" />`)}</div>
        </div>
        <div class="sep"></div>
        <div class="mode3d">3D Mode:</div>
        <div class="cells3d">
          ${threeD.map((i) => html`<div class="cell">${ic(36, 32, i)}</div>`)}
        </div>
        <div class="opt-right">
          ${ic(
            27,
            26,
            svg`<circle cx="16" cy="11" r="9.500" fill="none" stroke="currentColor" stroke-width="2.200" /><path d="M10 18l-8 7" stroke="currentColor" stroke-width="3.200" stroke-linecap="round" />`
          )}
          <div class="workspace">
            ${ic(
              31,
              25,
              svg`<path fill-rule="evenodd" d="M0 0h31v25H0zM2 5v18h27V5z" /><rect x="6" y="8" width="3" height="3" /><rect x="6" y="13" width="3" height="3" /><rect x="6" y="18" width="3" height="3" />`
            )}
          </div>
          <div class="wchev">${chev()}</div>
          ${ic(
            30,
            32,
            svg`<path d="M10 12H1v19h28V12h-9" fill="none" stroke="currentColor" stroke-width="2" /><path d="M15 2v19" stroke="currentColor" stroke-width="2" /><path d="M9 9l6-8 6 8" fill="none" stroke="currentColor" stroke-width="2" />`
          )}
        </div>
      </div>

      <div class="main">
        <div class="tools">
          <div class="collapse">
            ${ic(
              14,
              10,
              svg`<path d="M1 1l4 4-4 4M8 1l4 4-4 4" fill="none" stroke="currentColor" stroke-width="1.300" />`
            )}
          </div>
          <div class="grip"></div>
          ${this.renderTools()}
          <div class="swap">
            ${ic(20, 20, svg`<path d="M0 0h13v12H0z" fill="#111" stroke="#ddd" stroke-width="1.500" /><path d="M6 14h7V8h7v12H6z" />`)}
            ${ic(
              20,
              20,
              svg`<path d="M0 5l6-5v3h11v10h3l-4 6-5-6h3V6H6v3z" />`
            )}
          </div>
          <div class="fgbg">
            <div class="bg"></div>
            <div class="fg"></div>
          </div>
          <div class="mask">
            ${ic(
              34,
              25,
              svg`<rect x="1" y="1" width="32" height="23" fill="none" stroke="currentColor" stroke-width="2" /><circle cx="17" cy="12.500" r="8" fill="none" stroke="currentColor" stroke-width="1.800" stroke-dasharray="2 2.400" />`
            )}
          </div>
          <div class="screens">
            ${ic(
              36,
              24,
              svg`<path d="M10 8H1v15h22v-3" fill="none" stroke="currentColor" stroke-width="2" /><rect x="11" y="1" width="23" height="16" fill="none" stroke="currentColor" stroke-width="2" />`
            )}
          </div>
        </div>

        <div class="center">
          <div class="tabs">
            ${[
              ["Untitled-1 @ 118% (RGB/8) *", 394],
              ["Arduino.jpg @ 193% (Layer 0, RGB/8#) *", 521],
              ["breadboard-400-point-500x500.jpeg @ 293% (Layer 0, RGB/8#) *", 817],
            ].map(
              ([t, w], i) => html`<div class="tab ${i === 0 ? "on" : ""} ${i < 2 ? "short" : ""}" style="width:${w}px">
                ${ic(12, 12, svg`<path d="M1 1l10 10M11 1L1 11" stroke="currentColor" stroke-width="1.700" />`)}
                <span>${t}</span>
              </div>`
            )}
          </div>
          <div class="stage">
            <div class="pasteboard">
              <svg class="doc" viewBox="526 248 1274 1456">${this.renderBoard()}</svg>
            </div>
            <div class="vscroll"><div></div></div>
          </div>
          <div class="status">
            <div class="zoom">117.94%</div>
            <div class="docinfo">
              <span>Doc: 3.84M/23.2M</span>
              ${ic(10, 20, svg`<path d="M1 1l7 9-7 9" fill="none" stroke="currentColor" stroke-width="1.600" />`)}
            </div>
            <div class="hthumb"></div>
          </div>
        </div>
        <div class="gutter"></div>

        <div class="dock">
          <div class="collapse">
            ${ic(14, 10, svg`<path d="M6 1L2 5l4 4M13 1L9 5l4 4" fill="none" stroke="currentColor" stroke-width="1.300" />`)}
            ${ic(14, 10, svg`<path d="M1 1l4 4-4 4M8 1l4 4-4 4" fill="none" stroke="currentColor" stroke-width="1.300" />`)}
          </div>
          <div class="dock-body">
            <div class="icons">
              <div class="igroup a">
                <div class="grip"></div>
                ${ic(29, 34, dockIcons.history, 29, 50)}
              </div>
              <div class="igroup a">
                <div class="grip"></div>
                ${ic(30, 32, dockIcons.cube, 35, 50)}
              </div>
              <div class="igroup b">
                <div class="grip"></div>
                ${ic(41, 33, dockIcons.brushes, 42, 42)}
                ${ic(42, 32, dockIcons.sliders, 42, 46)}
              </div>
              <div class="igroup c">
                <div class="grip"></div>
                <div class="glyph">A|</div>
                <div class="pilcrow">¶</div>
              </div>
            </div>
            <div class="gutter"></div>
            <div class="panels">
              <div class="ptabs">
                <div class="ptab on">Color</div>
                <div class="ptab">Swatches</div>
                <div class="burger"></div>
              </div>
              <div class="colorbody">
                <div class="cswatch">
                  <div class="cbg"></div>
                  <div class="cfg"></div>
                </div>
                <div class="field"></div>
                <div class="hue"></div>
              </div>
              <div class="pend"></div>

              <div class="ptabs">
                <div class="ptab on">Adjustments</div>
                <div class="burger"></div>
              </div>
              <div class="adjbody">
                <div class="adjlabel">Add an adjustment</div>
                ${adjIcons.map(
                  (row, r) => html`<div class="adjrow r${r + 1}">
                    ${row.map((i, k) => html`<div class="acell">${ic(33, r === 0 && k === 0 ? 33 : 27, i, 36, 36)}</div>`)}
                  </div>`
                )}
              </div>
              <div class="pend"></div>

              <div class="ptabs">
                <div class="ptab on">Layers</div>
                <div class="ptab">Channels</div>
                <div class="ptab">Paths</div>
                <div class="burger"></div>
              </div>
              <div class="layerbar f">
                <div class="combo kind">
                  ${ic(
                    22,
                    22,
                    svg`<circle cx="13" cy="10" r="7.500" fill="none" stroke="currentColor" stroke-width="2" /><path d="M8 16l-6 7" stroke="currentColor" stroke-width="2.600" stroke-linecap="round" />`,
                    22,
                    26
                  )}
                  <span>Kind</span>
                  ${chev()}
                </div>
                ${filterIcons.map((i) => html`<div class="fcell">${ic(23, 20, i, 24, 24)}</div>`)}
                <div class="toggle"></div>
              </div>
              <div class="layerbar n">
                <div class="combo normal"><span>Normal</span>${chev()}</div>
                <div class="olabel">Opacity:</div>
                <div class="combo pct"><span>100%</span><div class="arrow">${chev()}</div></div>
              </div>
              <div class="layerbar l">
                <div class="lock-label">Lock:</div>
                ${lockIcons.map((i, k) => html`<div class="lcell ${k === 1 ? "dim" : ""}">${ic(24, 24, i, k === 1 ? 30 : k === 0 ? 24 : 26, k === 1 ? 30 : k === 0 ? 24 : 26)}</div>`)}
                <div class="fill-label">Fill:</div>
                <div class="combo pct"><span>100%</span><div class="arrow">${chev()}</div></div>
              </div>
              <div class="layers">
                <div class="rows">${LAYERS.map((n) => this.renderLayerRow(n))}</div>
                <div class="lscroll"><div></div></div>
              </div>
              <div class="pfooter">
                <div class="fc">
                  ${ic(
                    27,
                    14,
                    svg`<path d="M10 2H7a7 8 0 0 0 0 16h3M18 2h3a7 8 0 0 1 0 16h-3" fill="none" stroke="currentColor" stroke-width="2" /><path d="M8 8h12v4H8z" />`,
                    28,
                    20
                  )}
                </div>
                <div class="fc"><span class="fx">fx</span></div>
                <div class="fc">
                  ${ic(
                    26,
                    19,
                    svg`<path fill-rule="evenodd" d="M0 0h26v26H0zM13 6a5 7 0 1 0 0 14 5 7 0 0 0 0-14z" fill="#8e8e8e" />`,
                    26,
                    26
                  )}
                </div>
                <div class="fc">
                  ${ic(
                    30,
                    26,
                    svg`<ellipse cx="11" cy="14" rx="10" ry="13" fill="none" stroke="currentColor" stroke-width="1.800" /><path d="M16 3a10 13 0 0 1-10 23z" /><path d="M20 29h8l-4 5z" />`,
                    30,
                    36
                  )}
                </div>
                <div class="fc">${ic(25, 20, svg`<path d="M1 7h25v21H1z M1 1h11v3H1z" />`, 26, 28)}</div>
                <div class="fc">
                  ${ic(
                    21,
                    20,
                    svg`<path d="M1 1h20v28H8l-7-7z" fill="none" stroke="currentColor" stroke-width="2" /><path d="M1 1h20v18H1z" />`,
                    22,
                    30
                  )}
                </div>
                <div class="fc">
                  ${ic(
                    22,
                    24,
                    svg`<path d="M1 6h22M8 6V1h8v5M4 6v25h16V6M9 10v17M12 10v17M15 10v17" fill="none" stroke="currentColor" stroke-width="1.800" />`,
                    24,
                    32
                  )}
                </div>
              </div>
            </div>
          </div>
        </div>
      </div>
    </div>`;
  }
}
